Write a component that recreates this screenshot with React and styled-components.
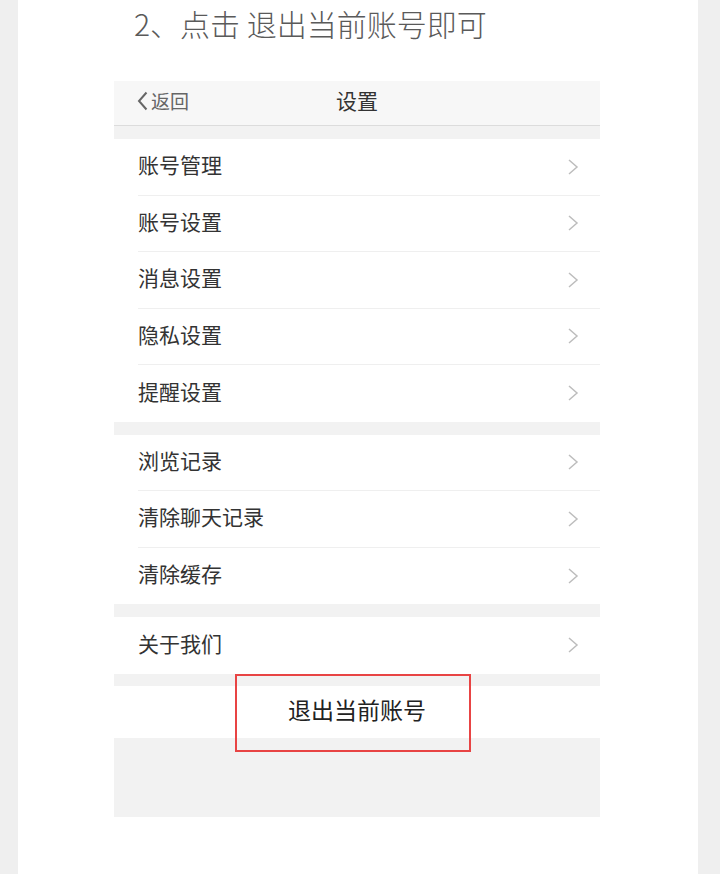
import React from 'react';
import styled, { createGlobalStyle } from 'styled-components';

const GlobalStyle = createGlobalStyle`
  body {
    margin: 0;
    background: #efefef;
    font-family: "Noto Sans CJK SC", "Noto Sans", sans-serif;
  }
`;

const Page = styled.div`
  width: 680px;
  min-height: 874px;
  margin-left: 18px;
  background: #fff;
  overflow: hidden;
`;

const Heading = styled.h2`
  margin: 0;
  padding-left: 116px;
  height: 50px;
  line-height: 46px;
  font-size: 30px;
  font-weight: 300;
  color: #5a5a5a;
`;

const Phone = styled.div`
  width: 486px;
  margin: 31px 0 0 96px;
  background: #f2f2f2;
  padding-bottom: 79px;
`;

const NavBar = styled.div`
  position: relative;
  height: 45px;
  box-sizing: border-box;
  padding-bottom: 6px;
  background: #f7f7f7;
  border-bottom: 1px solid #dcdcdc;
  display: flex;
  align-items: center;
  justify-content: center;
`;

const Back = styled.div`
  position: absolute;
  left: 23px;
  top: 0;
  height: 39px;
  display: flex;
  align-items: center;
  gap: 3px;
  font-size: 19px;
  color: #666;
`;

const Title = styled.div`
  font-size: 21px;
  color: #333;
`;

const Group = styled.div`
  background: #fff;
  margin-top: ${({ gap }) => gap}px;
`;

const Row = styled.div`
  height: 56.5px;
  box-sizing: border-box;
  margin-left: 24px;
  padding: 0 21px 5px 0;
  display: flex;
  align-items: center;
  justify-content: space-between;
  border-bottom: 1px solid #efefef;
  font-size: 21px;
  color: #333;

  &:last-child {
    border-bottom: none;
  }
`;

const ChevronBox = styled.svg`
  margin-top: 5px;
`;

const Logout = styled.div`
  position: relative;
  margin-top: 12px;
  height: 52px;
  box-sizing: border-box;
  padding-bottom: 5px;
  background: #fff;
  display: flex;
  align-items: center;
  justify-content: center;
  font-size: 23px;
  color: #222;
`;

const Highlight = styled.div`
  position: absolute;
  left: 121px;
  top: -12px;
  width: 236px;
  height: 78px;
  box-sizing: border-box;
  border: 2px solid #e84444;
`;

const Chevron = () => (
  <ChevronBox width="12" height="16" viewBox="0 0 12 16" fill="none">
    <path d="M2 1 L10 8 L2 15" stroke="#bdbdbd" strokeWidth="1.5" />
  </ChevronBox>
);

const BackArrow = () => (
  <svg width="11" height="20" viewBox="0 0 11 20" fill="none">
    <path d="M9.5 1.5 L2 10 L9.5 18.5" stroke="#666" strokeWidth="2" />
  </svg>
);

const groups = [
  ['账号管理', '账号设置', '消息设置', '隐私设置', '提醒设置'],
  ['浏览记录', '清除聊天记录', '清除缓存'],
  ['关于我们'],
];

export default function App() {
  return (
    <>
      <GlobalStyle />
      <Page>
        <Heading>2、点击 退出当前账号即可</Heading>
        <Phone>
          <NavBar>
            <Back>
              <BackArrow />
              返回
            </Back>
            <Title>设置</Title>
          </NavBar>
          {groups.map((items, i) => (
            <Group key={i} gap={13}>
              {items.map((label) => (
                <Row key={label}>
                  {label}
                  <Chevron />
                </Row>
              ))}
            </Group>
          ))}
          <Logout>
            退出当前账号
            <Highlight />
          </Logout>
        </Phone>
      </Page>
    </>
  );
}
